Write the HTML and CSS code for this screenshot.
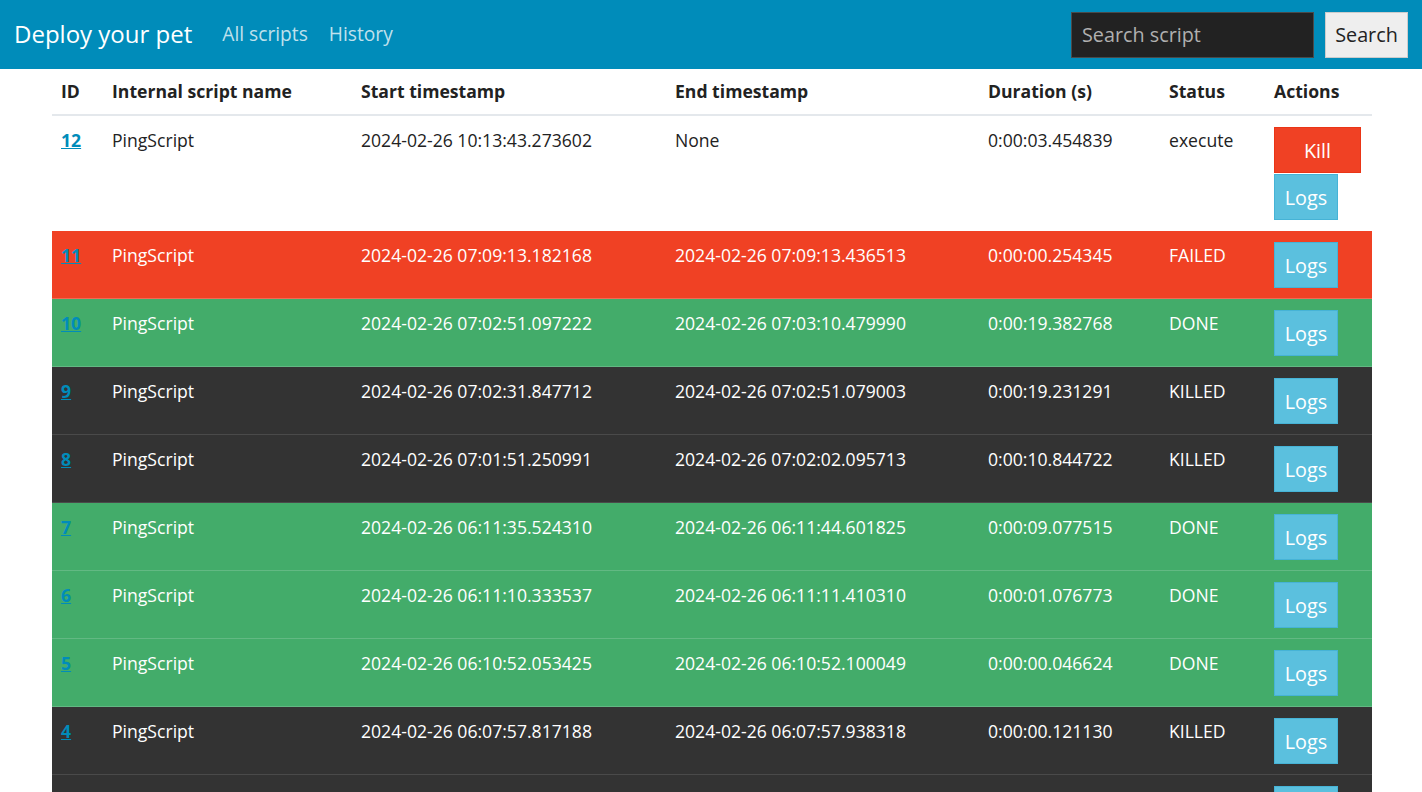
FILE: index.html
```html
<!DOCTYPE html>
<html lang="en">
<head>
<meta charset="utf-8">
<title>Deploy your pet</title>
<link rel="stylesheet" href="styles.css">
</head>
<body>
<nav class="navbar">
  <div class="nav-left">
    <a class="brand" href="#">Deploy your pet</a>
    <a class="nav-link" href="#">All scripts</a>
    <a class="nav-link" href="#">History</a>
  </div>
  <form class="search">
    <input class="search-input" type="text" placeholder="Search script">
    <button class="btn-search" type="button">Search</button>
  </form>
</nav>
<main class="content">
  <table class="runs">
    <colgroup>
      <col class="c-id"><col class="c-name"><col class="c-start"><col class="c-end"><col class="c-dur"><col class="c-status"><col class="c-actions">
    </colgroup>
    <thead>
      <tr><th>ID</th><th>Internal script name</th><th>Start timestamp</th><th>End timestamp</th><th>Duration (s)</th><th>Status</th><th>Actions</th></tr>
    </thead>
    <tbody>
      <tr class="row-first">
        <td><a class="id-link" href="#">12</a></td><td>PingScript</td><td>2024-02-26 10:13:43.273602</td><td>None</td><td>0:00:03.454839</td><td>execute</td>
        <td><div class="actions"><button class="btn btn-kill" type="button">Kill</button><button class="btn btn-logs" type="button">Logs</button></div></td>
      </tr>
      <tr class="row-failed">
        <td><a class="id-link" href="#">11</a></td><td>PingScript</td><td>2024-02-26 07:09:13.182168</td><td>2024-02-26 07:09:13.436513</td><td>0:00:00.254345</td><td>FAILED</td>
        <td><div class="actions"><button class="btn btn-logs" type="button">Logs</button></div></td>
      </tr>
      <tr class="row-done">
        <td><a class="id-link" href="#">10</a></td><td>PingScript</td><td>2024-02-26 07:02:51.097222</td><td>2024-02-26 07:03:10.479990</td><td>0:00:19.382768</td><td>DONE</td>
        <td><div class="actions"><button class="btn btn-logs" type="button">Logs</button></div></td>
      </tr>
      <tr class="row-killed">
        <td><a class="id-link" href="#">9</a></td><td>PingScript</td><td>2024-02-26 07:02:31.847712</td><td>2024-02-26 07:02:51.079003</td><td>0:00:19.231291</td><td>KILLED</td>
        <td><div class="actions"><button class="btn btn-logs" type="button">Logs</button></div></td>
      </tr>
      <tr class="row-killed">
        <td><a class="id-link" href="#">8</a></td><td>PingScript</td><td>2024-02-26 07:01:51.250991</td><td>2024-02-26 07:02:02.095713</td><td>0:00:10.844722</td><td>KILLED</td>
        <td><div class="actions"><button class="btn btn-logs" type="button">Logs</button></div></td>
      </tr>
      <tr class="row-done">
        <td><a class="id-link" href="#">7</a></td><td>PingScript</td><td>2024-02-26 06:11:35.524310</td><td>2024-02-26 06:11:44.601825</td><td>0:00:09.077515</td><td>DONE</td>
        <td><div class="actions"><button class="btn btn-logs" type="button">Logs</button></div></td>
      </tr>
      <tr class="row-done">
        <td><a class="id-link" href="#">6</a></td><td>PingScript</td><td>2024-02-26 06:11:10.333537</td><td>2024-02-26 06:11:11.410310</td><td>0:00:01.076773</td><td>DONE</td>
        <td><div class="actions"><button class="btn btn-logs" type="button">Logs</button></div></td>
      </tr>
      <tr class="row-done">
        <td><a class="id-link" href="#">5</a></td><td>PingScript</td><td>2024-02-26 06:10:52.053425</td><td>2024-02-26 06:10:52.100049</td><td>0:00:00.046624</td><td>DONE</td>
        <td><div class="actions"><button class="btn btn-logs" type="button">Logs</button></div></td>
      </tr>
      <tr class="row-killed">
        <td><a class="id-link" href="#">4</a></td><td>PingScript</td><td>2024-02-26 06:07:57.817188</td><td>2024-02-26 06:07:57.938318</td><td>0:00:00.121130</td><td>KILLED</td>
        <td><div class="actions"><button class="btn btn-logs" type="button">Logs</button></div></td>
      </tr>
      <tr class="row-killed row-last">
        <td></td><td></td><td></td><td></td><td></td><td></td>
        <td><div class="actions"><button class="btn btn-logs" type="button">Logs</button></div></td>
      </tr>
    </tbody>
  </table>
</main>
</body>
</html>
```
FILE: styles.css
```css
* { box-sizing: border-box; }

html, body {
  margin: 0;
  padding: 0;
}

body {
  font-family: "Open Sans", "Liberation Sans", sans-serif;
  font-size: 17.6px;
  line-height: 1.5;
  color: #222;
  background: #fff;
}

.navbar {
  background: #008cba;
  height: 69px;
  display: flex;
  align-items: center;
  justify-content: space-between;
  padding: 0 14px 0 14px;
}

.nav-left {
  display: flex;
  align-items: center;
}

.brand {
  color: #fff;
  text-decoration: none;
  font-size: 24px;
  font-weight: 400;
  line-height: 1.5;
  margin-right: 20px;
}

.nav-link {
  color: rgba(255, 255, 255, 0.75);
  text-decoration: none;
  font-size: 19.2px;
  font-weight: 400;
  padding: 8px 10px;
}

.nav-link + .nav-link { margin-left: 1px; }

.search {
  display: flex;
  align-items: center;
  gap: 11px;
  margin: 0;
}

.search-input {
  width: 243px;
  height: 46px;
  background: #222;
  border: 1px solid #4a4a4a;
  color: #fff;
  font-family: inherit;
  font-size: 19.8px;
  padding: 0 10px;
  outline: none;
  border-radius: 0;
}

.search-input::placeholder {
  color: #b0b0b0;
}

.btn-search {
  height: 46px;
  width: 83px;
  background: #eee;
  border: 1px solid #ccc;
  color: #222;
  font-family: inherit;
  font-size: 19.8px;
  padding: 0;
  border-radius: 0;
}

.content {
  display: flex;
  justify-content: center;
  padding: 1px 0 0 2px;
}

.runs {
  width: 1320px;
  border-collapse: collapse;
  table-layout: fixed;
}

.c-id { width: 51px; }
.c-name { width: 249px; }
.c-start { width: 314px; }
.c-end { width: 313px; }
.c-dur { width: 181px; }
.c-status { width: 105px; }
.c-actions { width: 107px; }

.runs th {
  text-align: left;
  font-weight: 700;
  padding: 8px 9px 10px;
  border-bottom: 2px solid #e4e8ec;
  white-space: nowrap;
}

.runs td {
  padding: 11px 9px 10px;
  vertical-align: top;
  border-bottom: 1px solid rgba(0, 0, 0, 0.08);
  white-space: nowrap;
}

.id-link {
  color: #008cba;
  font-weight: 700;
  text-decoration: underline;
}

.row-failed td {
  background: #f04124;
  color: #fff;
  border-bottom-color: #f26a54;
}

.row-done td {
  background: #43ac6a;
  color: #fff;
  border-bottom-color: #62b983;
}

.row-killed td {
  background: #333;
  color: #fff;
  border-bottom-color: #4a4a4a;
}

.row-first td {
  border-bottom-color: transparent;
}

.actions {
  display: flex;
  flex-direction: column;
  align-items: flex-start;
  gap: 1px;
}

.btn {
  font-family: inherit;
  font-size: 19.8px;
  line-height: 1.3;
  height: 46px;
  border-radius: 0;
  color: #fff;
  cursor: pointer;
}

.btn-kill {
  width: 87px;
  background: #f04124;
  border: 1px solid #ea3516;
  padding: 0;
}

.btn-logs {
  width: 64px;
  background: #5bc0de;
  border: 1px solid #46b3d6;
  padding: 0;
}
```
